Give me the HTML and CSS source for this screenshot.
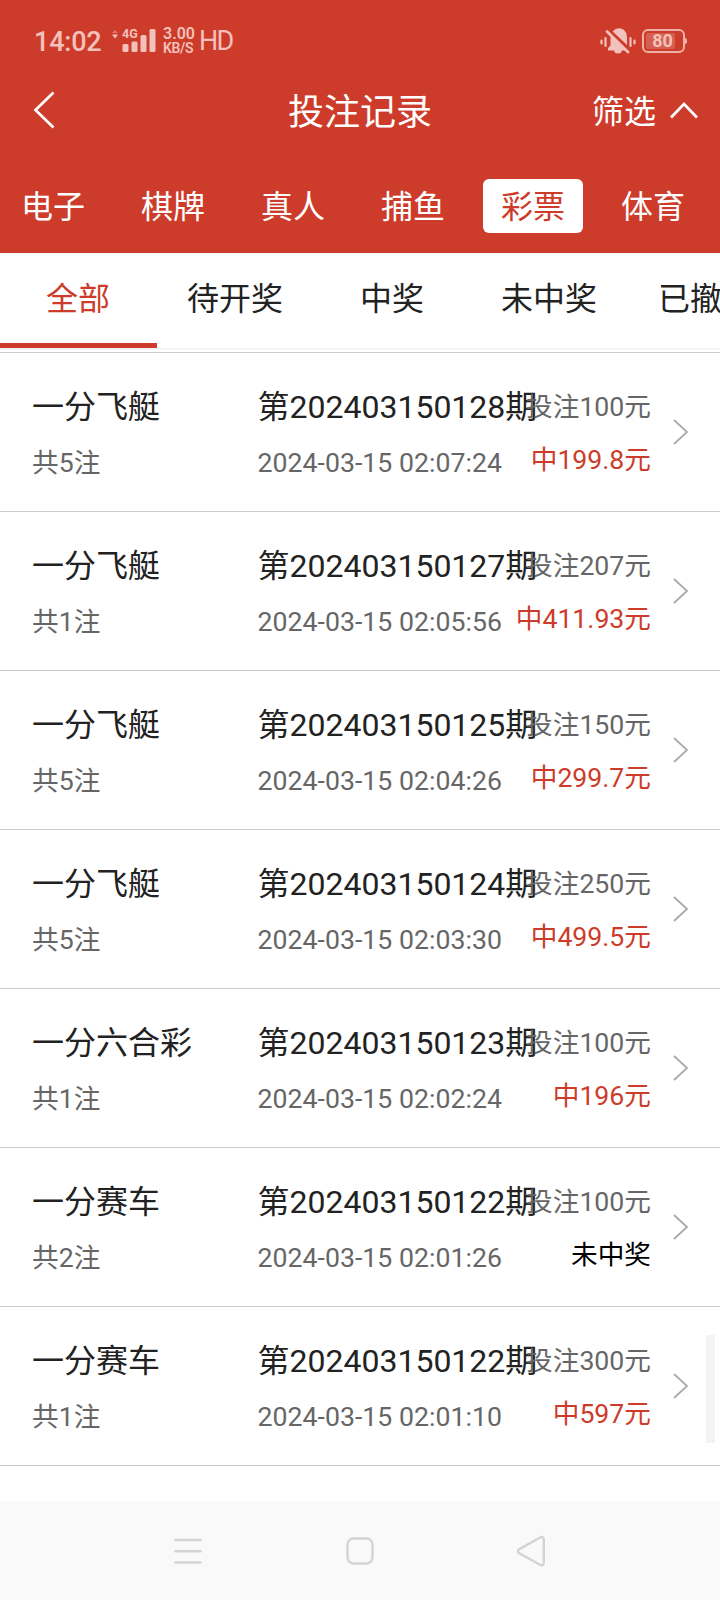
FILE: index.html
```html
<!DOCTYPE html>
<html lang="zh-CN">
<head>
<meta charset="utf-8">
<title>投注记录</title>
<link rel="stylesheet" href="styles.css">
</head>
<body>
<div class="screen">
  <header class="header">
    <div class="status">
      <span class="clock">14:02</span>
      <div class="signal">
        <svg class="signal-bars" width="48" height="28" viewBox="0 0 48 28" fill="currentColor">
          <path d="M1 6 L4 3 L7 6Z" opacity=".45"/>
          <path d="M1 7.500 H7 L4 11.500Z"/>
          <rect x="11.500" y="17" width="6" height="8" rx="1.500"/>
          <rect x="20.500" y="14.500" width="6" height="10.500" rx="1.500"/>
          <rect x="29.500" y="8" width="6" height="17" rx="1.500"/>
          <rect x="38.500" y="2" width="6" height="23" rx="1.500"/>
        </svg>
        <span class="net">4G</span>
      </div>
      <div class="speed"><span>3.00</span><span>KB/S</span></div>
      <span class="hd">HD</span>
      <svg class="mute" width="36" height="28" viewBox="0 0 36 28" fill="currentColor">
        <path d="M8 23.500v-2.500l2.500-2.500v-7q0-1.500.5-3L26.500 23.500H22q-.5 3-4 3t-4-3Z"/>
        <path d="M12.500 4.500 Q17-.5 22.500 2 Q27 4.500 27 11 V18Z"/>
        <path d="M7 4.500 L28 25" stroke="currentColor" stroke-width="2.800" stroke-linecap="round"/>
        <path d="M10.500 4 L28 21.500" stroke="#cd3c2a" stroke-width="1.600"/>
        <path d="M1.500 13.500v3M5.500 11v8M30.500 11v8M34.500 13.500v3" stroke="currentColor" stroke-width="2.200" stroke-linecap="round"/>
      </svg>
      <div class="battery"><span class="level">80</span></div>
    </div>
    <div class="titlebar">
      <svg class="back" width="24" height="40" viewBox="0 0 24 40" fill="none" stroke="#fff" stroke-width="2.700"><path d="M21.500 2.500 L3.500 20 L21.500 37.500"/></svg>
      <h1 class="title">投注记录</h1>
      <div class="filter"><span>筛选</span><svg width="28" height="18" viewBox="0 0 28 18" fill="none" stroke="#fff" stroke-width="2.700"><path d="M1 16.500 L14 3 L27 16.500"/></svg></div>
    </div>
    <nav class="cats">
      <span class="cat">电子</span><span class="cat">棋牌</span><span class="cat">真人</span><span class="cat">捕鱼</span><span class="cat active">彩票</span><span class="cat">体育</span>
    </nav>
  </header>
  <nav class="tabs">
    <span class="tab active">全部</span><span class="tab">待开奖</span><span class="tab">中奖</span><span class="tab">未中奖</span><span class="tab">已撤单</span>
  </nav>
  <main class="list">
    <article class="row"><div class="game"><p class="main">一分飞艇</p><p class="sub">共5注</p></div><div class="issue"><p class="main">第202403150128期</p><p class="sub">2024-03-15 02:07:24</p></div><div class="money"><p class="bet">投注100元</p><p class="win">中199.8元</p></div><svg class="arrow" width="16" height="26" viewBox="0 0 16 26"><path d="M1 1 L14 13 L1 25"/></svg></article>
    <article class="row"><div class="game"><p class="main">一分飞艇</p><p class="sub">共1注</p></div><div class="issue"><p class="main">第202403150127期</p><p class="sub">2024-03-15 02:05:56</p></div><div class="money"><p class="bet">投注207元</p><p class="win">中411.93元</p></div><svg class="arrow" width="16" height="26" viewBox="0 0 16 26"><path d="M1 1 L14 13 L1 25"/></svg></article>
    <article class="row"><div class="game"><p class="main">一分飞艇</p><p class="sub">共5注</p></div><div class="issue"><p class="main">第202403150125期</p><p class="sub">2024-03-15 02:04:26</p></div><div class="money"><p class="bet">投注150元</p><p class="win">中299.7元</p></div><svg class="arrow" width="16" height="26" viewBox="0 0 16 26"><path d="M1 1 L14 13 L1 25"/></svg></article>
    <article class="row"><div class="game"><p class="main">一分飞艇</p><p class="sub">共5注</p></div><div class="issue"><p class="main">第202403150124期</p><p class="sub">2024-03-15 02:03:30</p></div><div class="money"><p class="bet">投注250元</p><p class="win">中499.5元</p></div><svg class="arrow" width="16" height="26" viewBox="0 0 16 26"><path d="M1 1 L14 13 L1 25"/></svg></article>
    <article class="row"><div class="game"><p class="main">一分六合彩</p><p class="sub">共1注</p></div><div class="issue"><p class="main">第202403150123期</p><p class="sub">2024-03-15 02:02:24</p></div><div class="money"><p class="bet">投注100元</p><p class="win">中196元</p></div><svg class="arrow" width="16" height="26" viewBox="0 0 16 26"><path d="M1 1 L14 13 L1 25"/></svg></article>
    <article class="row"><div class="game"><p class="main">一分赛车</p><p class="sub">共2注</p></div><div class="issue"><p class="main">第202403150122期</p><p class="sub">2024-03-15 02:01:26</p></div><div class="money"><p class="bet">投注100元</p><p class="win lost">未中奖</p></div><svg class="arrow" width="16" height="26" viewBox="0 0 16 26"><path d="M1 1 L14 13 L1 25"/></svg></article>
    <article class="row"><div class="game"><p class="main">一分赛车</p><p class="sub">共1注</p></div><div class="issue"><p class="main">第202403150122期</p><p class="sub">2024-03-15 02:01:10</p></div><div class="money"><p class="bet">投注300元</p><p class="win">中597元</p></div><svg class="arrow" width="16" height="26" viewBox="0 0 16 26"><path d="M1 1 L14 13 L1 25"/></svg></article>
    <div class="scrollbar"></div>
  </main>
  <footer class="navbar">
    <svg width="30" height="32" viewBox="0 0 30 32"><path d="M2.500 5H27.500M2.500 16.300H27.500M2.500 27.500H27.500"/></svg>
    <svg width="30" height="32" viewBox="0 0 30 32"><rect x="2.500" y="3.500" width="25" height="25" rx="6"/></svg>
    <svg width="30" height="32" viewBox="0 0 30 32"><path d="M23.500 2.200 L1.800 14.500 Q-.2 16.200 1.800 18 L23.500 30 Q26.500 31 26.800 28 V4.500 Q26.500 1.200 23.500 2.200Z"/></svg>
  </footer>
</div>
</body>
</html>
```
FILE: styles.css
```css
* { box-sizing: border-box; }
body, h1, p { margin: 0; }
body { background: #fff; font-family: Roboto, "Noto Sans CJK SC", sans-serif; color: #222; }
.screen { width: 720px; height: 1600px; overflow: hidden; display: flex; flex-direction: column; }

.header { height: 253px; background: #cd3c2a; color: #fff; }
.status { height: 75px; padding: 6px 34px 0 34px; display: flex; align-items: center; color: #f3c1bc; }
.clock { width: 77px; font-size: 27px; line-height: 32px; font-weight: 500; letter-spacing: -.2px; padding-top: 2px; }
.signal { position: relative; width: 48px; height: 28px; }
.net { position: absolute; left: 11px; top: 0; font-size: 12.500px; line-height: 13px; font-weight: 700; }
.speed { width: 36px; margin-left: 4px; display: flex; flex-direction: column; font-size: 16px; line-height: 14px; font-weight: 600; white-space: nowrap; }
.speed span:last-child { font-size: 14px; letter-spacing: -.4px; }
.hd { font-size: 27px; line-height: 32px; letter-spacing: -1.700px; }
.mute { margin-left: auto; }
.battery { position: relative; width: 43px; height: 24px; margin: 0 1px 0 6px; border: 2px solid #efb0a9; border-radius: 6px; padding: 2px; display: flex; }
.battery::after { content: ""; position: absolute; right: -4px; top: 7px; width: 3px; height: 6px; background: #efb0a9; border-radius: 0 2px 2px 0; }
.level { width: 29px; height: 16px; background: #d5604f; border-radius: 2px; font-size: 18px; line-height: 16px; font-weight: 700; text-align: center; padding-left: 4px; }

.titlebar { height: 70px; padding: 0 22px 0 32px; display: grid; grid-template-columns: 150px 1fr 160px; align-items: center; }
.title { font-size: 36px; line-height: 44px; font-weight: 400; text-align: center; padding-top: 5px; }
.filter { display: flex; align-items: center; justify-content: flex-end; gap: 14px; font-size: 32px; line-height: 40px; }
.filter span { padding-top: 4px; }
.cats { display: flex; gap: 20px; padding: 34px 0 0 3px; }
.cat { flex: 0 0 100px; height: 54px; border-radius: 6px; text-align: center; font-size: 32px; line-height: 56px; }
.cat.active { background: #fff; color: #cd3c2a; }

.tabs { flex: none; height: 97px; display: flex; overflow: hidden; border-bottom: 2px solid #f3f3f3; }
.tab { flex: 0 0 157px; height: 95px; padding-right: 1px; text-align: center; font-size: 32px; line-height: 92px; }
.tab.active { color: #cd3c2a; border-bottom: 5px solid #cd3c2a; }

.list { position: relative; flex: none; height: 1151px; margin-top: 2px; border-top: 1px solid #ccc; }
.row { height: 159px; padding: 0 30px 0 32px; border-bottom: 1px solid #ccc; display: flex; align-items: center; white-space: nowrap; }
.game { flex: none; width: 225.500px; padding-top: 7px; }
.issue { flex: none; width: 245px; padding-top: 7px; }
.money { flex: none; width: 148.500px; padding-top: 4px; text-align: right; font-size: 26.670px; line-height: 53px; }
.main { font-size: 32px; line-height: 55px; }
.sub { font-size: 26.670px; line-height: 56px; color: #666; }
.issue .sub { letter-spacing: .03px; }
.bet { color: #666; }
.win { color: #cd3c2a; }
.win.lost { color: #000; }
.arrow { flex: none; margin-left: 22px; fill: none; stroke: #aaa; stroke-width: 1.800; }
.scrollbar { position: absolute; right: 5px; top: 982px; width: 9px; height: 108px; background: #f3f3f3; }

.navbar { flex: none; height: 99px; margin-top: -2px; background: #f9f9f9; padding: 1px 173px 0; display: flex; justify-content: space-between; align-items: center; }
.navbar svg { fill: none; stroke: #d3d3d3; stroke-width: 2.400; stroke-linecap: round; }
```
